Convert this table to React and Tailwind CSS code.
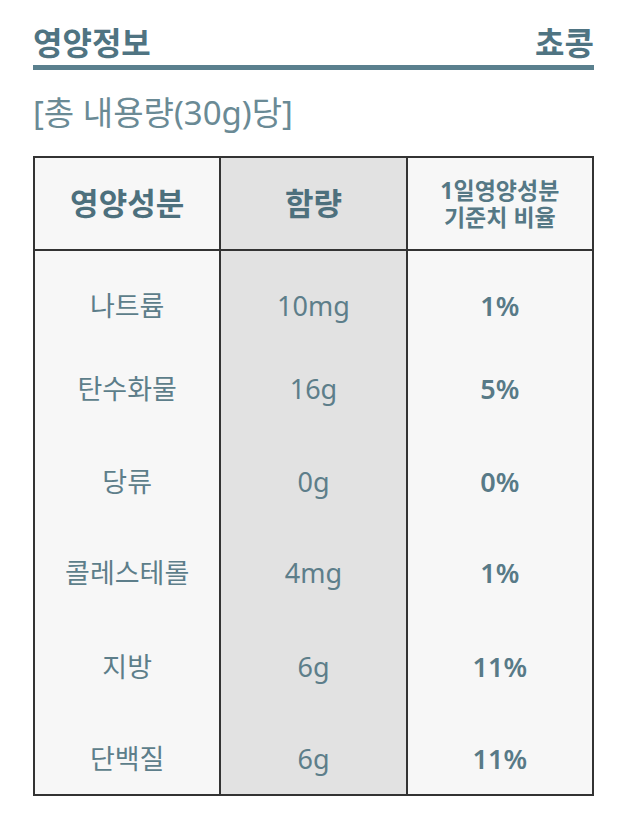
const rows = [
  { name: "나트륨", amount: "10mg", daily: "1%", h: "h-[84px]" },
  { name: "탄수화물", amount: "16g", daily: "5%", h: "h-[93px]" },
  { name: "당류", amount: "0g", daily: "0%", h: "h-[91px]" },
  { name: "콜레스테롤", amount: "4mg", daily: "1%", h: "h-[94px]" },
  { name: "지방", amount: "6g", daily: "11%", h: "h-[92px]" },
  { name: "단백질", amount: "6g", daily: "11%", h: "h-[91px]" },
];

export default function App() {
  return (
    <div
      className="min-h-screen bg-white pl-[33px] pr-[38px] pt-[22px]"
      style={{ fontFamily: "'Noto Sans', 'Noto Sans CJK KR', sans-serif" }}
    >
      {/* Title */}
      <div className="flex items-center justify-between border-b-[5px] border-[#5a808e] pb-[2px]">
        <h1 className="text-[32px] leading-[41px] font-bold text-[#4f7482]">영양정보</h1>
        <span className="text-[32px] leading-[41px] font-bold text-[#4f7482]">쵸콩</span>
      </div>

      <p className="mt-[22px] text-[33px] leading-[41px] text-[#6a8a95]">[총 내용량(30g)당]</p>

      {/* Table */}
      <table className="mt-[23px] w-full table-fixed border-collapse border-2 border-[#333]">
        <thead>
          <tr className="h-[93px] border-b-2 border-[#333]">
            <th className="w-1/3 bg-[#f7f7f7] text-[31px] font-bold text-[#4d707d] align-middle">영양성분</th>
            <th className="w-1/3 border-x-2 border-[#333] bg-[#e2e2e2] text-[31px] font-bold text-[#4d707d] align-middle">함량</th>
            <th className="w-1/3 bg-[#f7f7f7] text-[23px] font-bold text-[#557885] align-middle">
              <div className="leading-[27px]">1일영양성분</div>
              <div className="leading-[27px]">기준치 비율</div>
            </th>
          </tr>
        </thead>
        <tbody>
          {rows.map((r) => (
            <tr key={r.name} className={r.h}>
              <td className="bg-[#f7f7f7] pt-[39px] text-center align-top text-[27px] leading-[32px] text-[#5d7e8a]">
                {r.name}
              </td>
              <td className="border-x-2 border-[#333] bg-[#e2e2e2] pt-[39px] text-center align-top text-[27px] leading-[32px] text-[#5d7e8a]">
                {r.amount}
              </td>
              <td className="bg-[#f7f7f7] pt-[39px] text-center align-top text-[27px] leading-[32px] font-semibold text-[#587a87]">
                {r.daily}
              </td>
            </tr>
          ))}
        </tbody>
      </table>
    </div>
  );
}
